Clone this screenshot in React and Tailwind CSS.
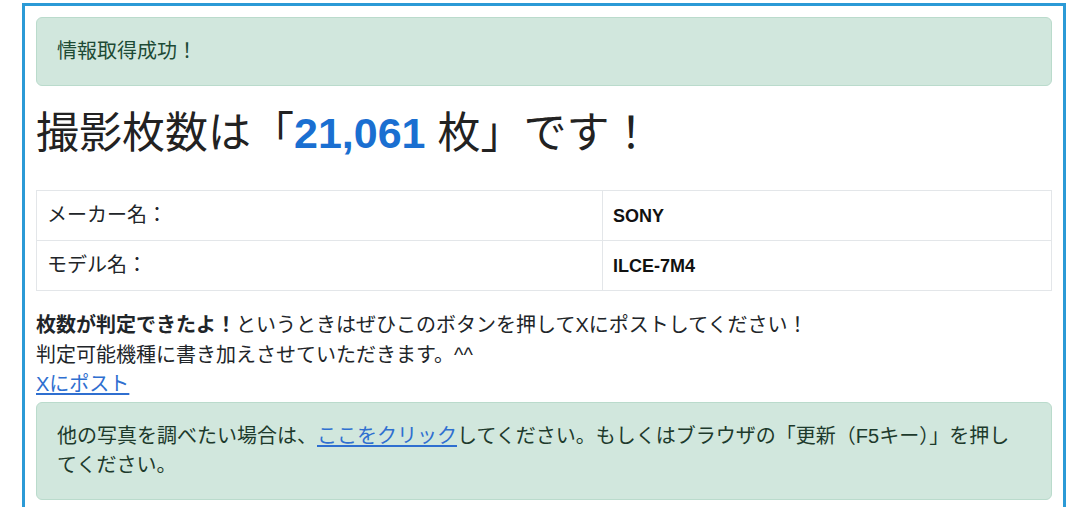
import React from 'react';

const jp = "font-['Liberation_Sans','Noto_Sans_CJK_JP',sans-serif]";

export default function App() {
  const rows = [
    { label: 'メーカー名：', value: 'SONY' },
    { label: 'モデル名：', value: 'ILCE-7M4' },
  ];

  return (
    <div className={`min-h-screen bg-white text-[#212529] ${jp}`}>
      {/* Outer frame */}
      <div className="ml-[22px] mt-[3px] w-[1044px] border-[3px] border-b-0 border-[#2b9ad6] p-[11px] text-[20px] leading-[1.47]">
        {/* Success alert */}
        <div className="rounded-md border border-[#badbcc] bg-[#d1e7dd] px-5 py-[19px] text-[#1d4a35]">
          情報取得成功！
        </div>

        {/* Result heading */}
        <h1 className="mt-[22px] text-[43px] leading-[50px] text-[#222]">
          撮影枚数は「<span className="font-bold text-[#1a6fd1]">21,061</span> 枚」です！
        </h1>

        {/* Camera info */}
        <table className="mt-[32px] w-full border-collapse border border-[#e3e6e9]">
          <tbody>
            {rows.map((r) => (
              <tr key={r.label} className="h-[50px]">
                <td className="w-[566px] border border-[#e3e6e9] px-[10px] align-middle">{r.label}</td>
                <td className="border border-[#e3e6e9] px-[10px] align-middle text-[18px] font-bold text-[#111]">
                  {r.value}
                </td>
              </tr>
            ))}
          </tbody>
        </table>

        {/* Post request */}
        <p className="mt-[20px]">
          <b>枚数が判定できたよ！</b>というときはぜひこのボタンを押してXにポストしてください！
          <br />
          判定可能機種に書き加えさせていただきます。^^
          <br />
          <a href="#" className="text-[#2f6fd0] underline underline-offset-2">Xにポスト</a>
        </p>

        {/* Info alert */}
        <div className="mt-[2px] rounded-md border border-[#badbcc] bg-[#d1e7dd] py-[19px] pl-5 pr-10 text-[#1d3a2c]">
          他の写真を調べたい場合は、
          <a href="#" className="text-[#2f6fd0] underline underline-offset-2">ここをクリック</a>
          してください。もしくはブラウザの「更新（F5キー）」を押してください。
        </div>
      </div>
    </div>
  );
}
